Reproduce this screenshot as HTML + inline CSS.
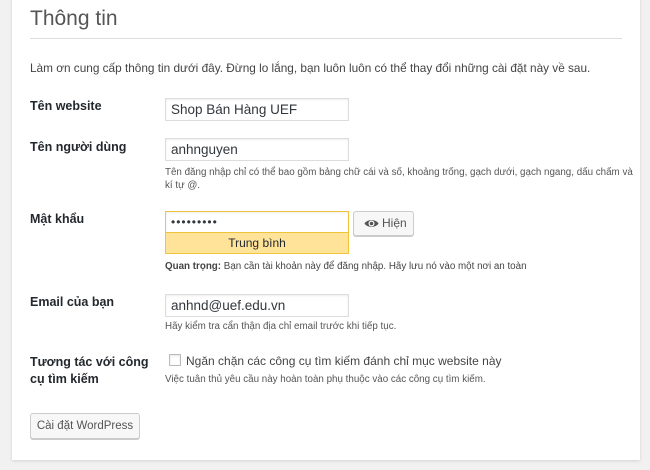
<!DOCTYPE html>
<html><head><meta charset="utf-8"><style>
body{margin:0;width:650px;height:470px;background:#f1f1f1;font-family:"Liberation Sans","DejaVu Sans",sans-serif;color:#444;position:relative;overflow:hidden}
.panel{position:absolute;left:12px;top:-5px;width:628px;height:465px;background:#fff;box-shadow:0 1px 3px rgba(0,0,0,.13)}
.a{position:absolute;white-space:nowrap}
.lbl{font-size:12.5px;font-weight:bold;color:#23282d}
.inp{position:absolute;left:165px;width:184px;height:23px;border:1px solid #ddd;box-shadow:inset 0 1px 2px rgba(0,0,0,.07);font-size:13.5px;color:#32373c;line-height:21px;padding-left:5px;box-sizing:border-box}
.hint{font-size:9.8px;color:#555}
</style></head><body>
<div class="panel"></div>
<div class="a" style="left:30px;top:7px;font-size:21px;color:#555">Thông tin</div>
<div class="a" style="left:30px;top:38px;width:592px;height:1px;background:#ddd"></div>
<div class="a" style="left:30px;top:61px;font-size:11.8px">Làm ơn cung cấp thông tin dưới đây. Đừng lo lắng, bạn luôn luôn có thể thay đổi những cài đặt này về sau.</div>

<div class="a lbl" style="left:30px;top:99px">Tên website</div>
<div class="inp" style="top:98px">Shop Bán Hàng UEF</div>

<div class="a lbl" style="left:30px;top:140px">Tên người dùng</div>
<div class="inp" style="top:138px">anhnguyen</div>
<div class="a hint" style="left:165px;top:166px;line-height:13px">Tên đăng nhập chỉ có thể bao gồm bảng chữ cái và số, khoảng trống, gạch dưới, gạch ngang, dấu chấm và<br>kí tự @.</div>

<div class="a lbl" style="left:30px;top:212px">Mật khẩu</div>
<div class="inp" style="top:211px;border-color:#f0c33c;height:22px;letter-spacing:1px;font-size:12px">•••••••••</div>
<div class="a" style="left:165px;top:233px;width:184px;height:21px;box-sizing:border-box;background:#ffe399;border:1px solid #f0c33c;border-top:none;text-align:center;font-size:12px;line-height:20px;color:#23282d">Trung bình</div>
<div class="a" style="left:353px;top:211px;width:59px;height:23px;border:1px solid #ccc;border-radius:3px;background:#f7f7f7;box-shadow:0 1px 0 #ccc;font-size:12px;line-height:23px;color:#555">
<svg style="position:absolute;left:10px;top:6px" width="15" height="11" viewBox="0 0 15 11"><path d="M0.5 5.5C3 1 12 1 14.5 5.5C12 10 3 10 0.5 5.5Z" fill="#555"/><circle cx="7.5" cy="5.5" r="3" fill="#fff"/><circle cx="7.5" cy="5.5" r="1.8" fill="#555"/></svg>
<span style="position:absolute;left:28px">Hiện</span></div>
<div class="a hint" style="left:165px;top:261px;color:#444"><b>Quan trọng:</b> Bạn cần tài khoản này để đăng nhập. Hãy lưu nó vào một nơi an toàn</div>

<div class="a lbl" style="left:30px;top:295px">Email của bạn</div>
<div class="inp" style="top:294px">anhnd@uef.edu.vn</div>
<div class="a hint" style="left:165px;top:321px">Hãy kiểm tra cẩn thận địa chỉ email trước khi tiếp tục.</div>

<div class="a lbl" style="left:30px;top:354px;line-height:17px">Tương tác với công<br>cụ tìm kiếm</div>
<div class="a" style="left:169px;top:354px;width:10px;height:10px;border:1px solid #bbb;box-shadow:inset 0 1px 2px rgba(0,0,0,.1)"></div>
<div class="a" style="left:186px;top:354px;font-size:12px">Ngăn chặn các công cụ tìm kiếm đánh chỉ mục website này</div>
<div class="a hint" style="left:165px;top:374px">Việc tuân thủ yêu cầu này hoàn toàn phụ thuộc vào các công cụ tìm kiếm.</div>

<div class="a" style="left:30px;top:413px;width:108px;height:24px;border:1px solid #ccc;border-radius:3px;background:#f7f7f7;box-shadow:0 1px 0 #ccc;font-size:11.5px;line-height:24px;text-align:center;color:#555">Cài đặt WordPress</div>
</body></html>
